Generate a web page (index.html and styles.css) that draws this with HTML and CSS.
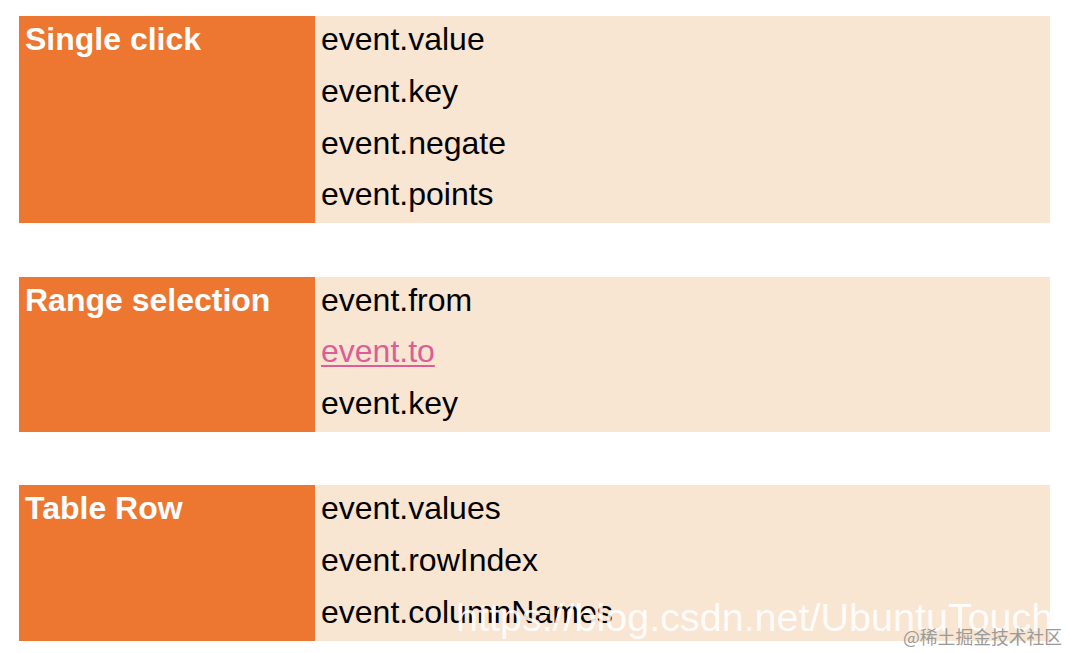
FILE: index.html
```html
<!DOCTYPE html>
<html>
<head>
<meta charset="utf-8">
<link rel="stylesheet" href="styles.css">
</head>
<body>
<div class="page">
  <div class="block">
    <div class="label">Single click</div>
    <div class="fields">
      <div class="row">event.value</div>
      <div class="row">event.key</div>
      <div class="row">event.negate</div>
      <div class="row">event.points</div>
    </div>
  </div>
  <div class="block">
    <div class="label">Range selection</div>
    <div class="fields">
      <div class="row">event.from</div>
      <div class="row"><a class="link" href="#">event.to</a></div>
      <div class="row">event.key</div>
    </div>
  </div>
  <div class="block">
    <div class="label">Table Row</div>
    <div class="fields">
      <div class="row">event.values</div>
      <div class="row">event.rowIndex</div>
      <div class="row">event.columnNames</div>
    </div>
  </div>
</div>
<div class="watermark">https://blog.csdn.net/UbuntuTouch</div>
<div class="credit">@稀土掘金技术社区</div>
</body>
</html>
```
FILE: styles.css
```css
html, body {
  margin: 0;
  padding: 0;
  background: #ffffff;
}
body {
  width: 1070px;
  height: 653px;
  position: relative;
  overflow: hidden;
  font-family: "Liberation Sans", Arial, sans-serif;
}
.page {
  display: flex;
  flex-direction: column;
  gap: 53.5px;
  padding: 16px 0 0 19px;
  width: 1031px;
}
.block {
  display: flex;
}
.label {
  width: 296px;
  flex: none;
  background: #ed7631;
  color: #ffffff;
  font-weight: bold;
  font-size: 32px;
  line-height: 46px;
  padding-left: 6px;
  box-sizing: border-box;
}
.fields {
  flex: 1;
  background: #f8e5d2;
  display: flex;
  flex-direction: column;
}
.row {
  height: 51.75px;
  box-sizing: border-box;
  font-size: 32px;
  line-height: 46px;
  padding-left: 6px;
  color: #000000;
}
.link {
  color: #dc5e96;
  text-decoration: underline;
  text-decoration-thickness: 2px;
  text-underline-offset: 3px;
}
.watermark {
  position: absolute;
  left: 456px;
  top: 592px;
  font-family: "Liberation Sans", Arial, sans-serif;
  font-size: 39.5px;
  line-height: 50px;
  color: rgba(255, 255, 255, 0.9);
  white-space: nowrap;
}
.credit {
  position: absolute;
  left: 903px;
  top: 624px;
  font-family: "Noto Sans CJK SC", sans-serif;
  font-size: 17.8px;
  line-height: 24px;
  color: #9a9a9a;
  white-space: nowrap;
}
```
